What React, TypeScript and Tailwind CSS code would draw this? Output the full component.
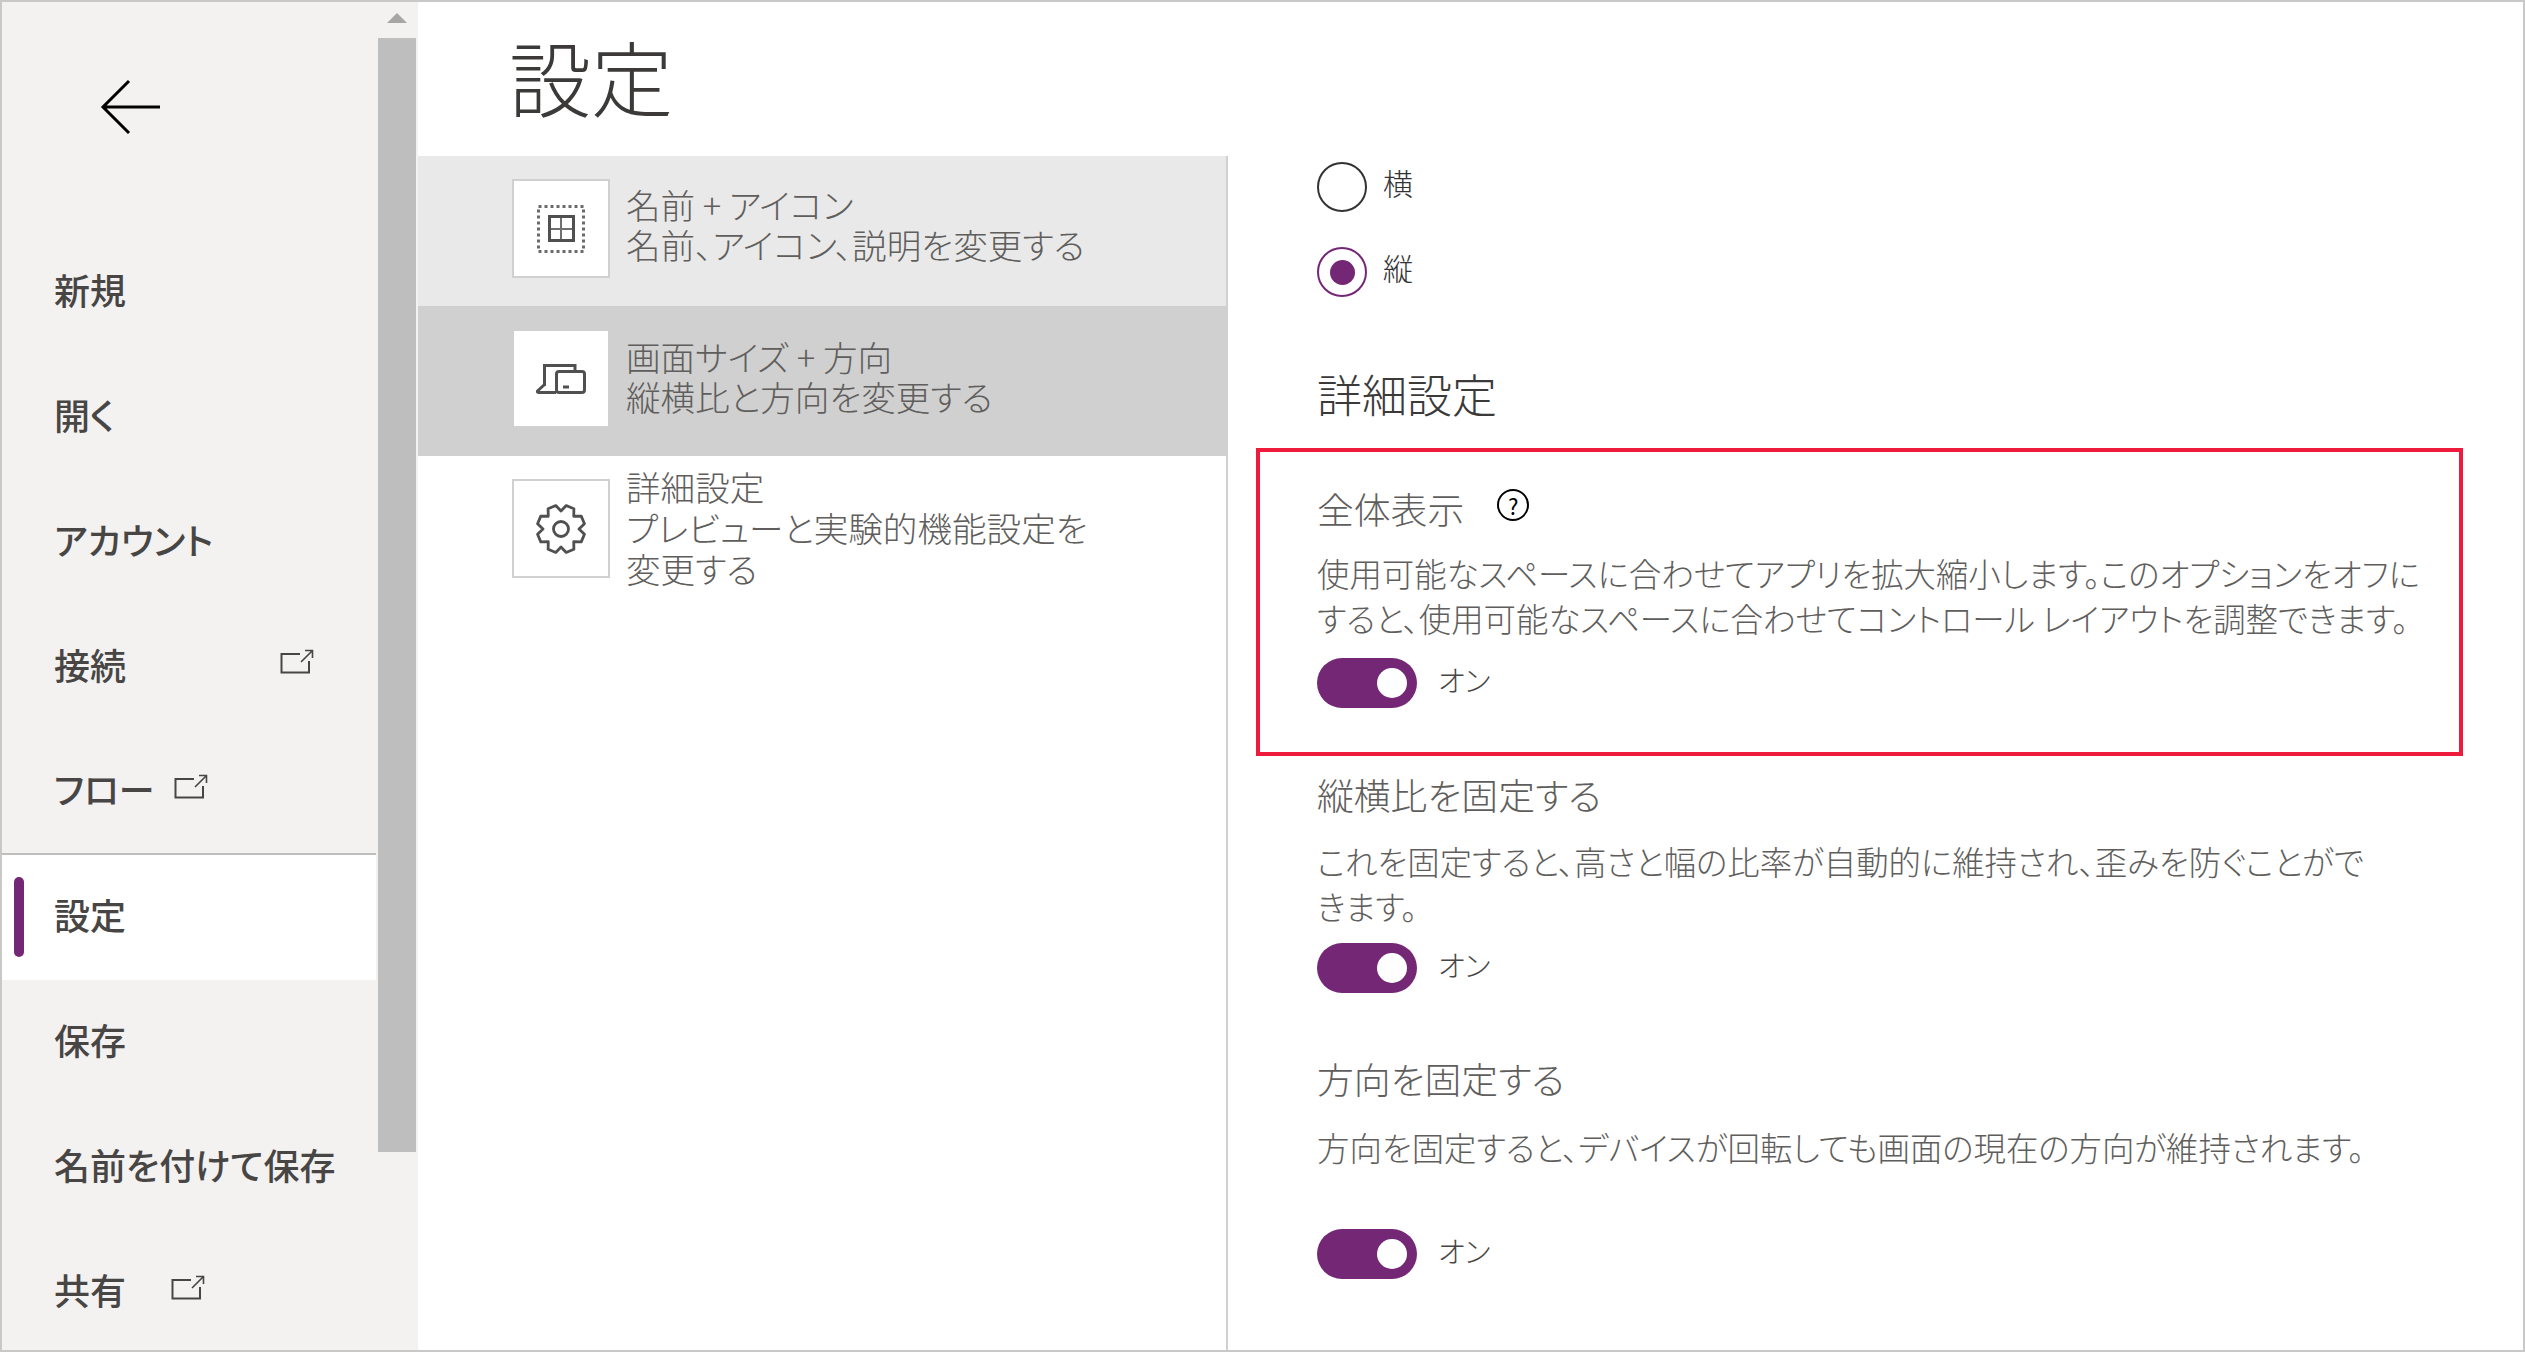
import React from 'react'

function ExternalIcon({ className }: { className: string }) {
    return (
        <svg className={className} width="34" height="25" viewBox="0 0 34 25" fill="none" stroke="#484644" strokeWidth="2">
            <path d="M20 5H1.5V23.5H29V12" />
            <path d="M21 13L32 2M25 1.5H32.5V9" strokeWidth="1.6" />
        </svg>
    )
}

// 8 teeth, with a notch straight up like the fluent gear glyph
const polar = (r: number, deg: number) => {
    const a = (deg * Math.PI) / 180
    return `${(26 + r * Math.sin(a)).toFixed(2)} ${(26 - r * Math.cos(a)).toFixed(2)}`
}
const gearPath =
    Array.from({ length: 8 }, (_, i) => {
        const c = 22.5 + i * 45
        return `${i === 0 ? 'M' : 'L'}${polar(18, c - 22.5)}L${polar(24, c - 10)}L${polar(24, c + 10)}`
    }).join('') + 'Z'

function GearIcon() {
    return (
        <svg width="52" height="52" viewBox="0 0 52 52" fill="none" stroke="#505050" strokeWidth="2.8" strokeLinejoin="round">
            <path d={gearPath} />
            <circle cx="26" cy="26" r="7.5" />
        </svg>
    )
}

const navItems = [
    { label: '新規' },
    { label: '開く' },
    { label: 'アカウント' },
    { label: '接続', icon: 'ml-[154px] -mt-[12px]' },
    { label: 'フロー', icon: 'ml-[19px] -mt-[10px]' },
    { label: '設定', active: true },
    { label: '保存' },
    { label: '名前を付けて保存' },
    { label: '共有', icon: 'ml-[45px] -mt-[10px]' },
]

function Sidebar() {
    return (
        <div className="w-[416px] shrink-0 flex bg-[#f3f2f1]">
            <div className="w-[374px] shrink-0">
                {/* back arrow */}
                <div className="h-[228px] pl-[98px] pt-[77px]">
                    <svg width="60" height="56" viewBox="0 0 60 56" fill="none" stroke="#000" strokeWidth="3">
                        <path d="M29 2L3 28L29 54M3 28H60" />
                    </svg>
                </div>
                {navItems.map((item) => (
                    <div
                        key={item.label}
                        className={`relative h-[125px] flex items-center pl-[52px] text-[36px] font-medium text-[#484644] ${item.active ? 'bg-white' : ''} ${item.label === 'フロー' ? 'border-b-2 border-[#bebebe]' : ''}`}
                    >
                        {item.active && <span className="absolute left-[12px] top-[22px] w-[10px] h-[80px] rounded-[5px] bg-[#742774]" />}
                        <span className="-mt-[7px]">{item.label}</span>
                        {item.icon && <ExternalIcon className={item.icon} />}
                    </div>
                ))}
            </div>
            <div className="ml-[2px] w-[38px] shrink-0">
                <div className="h-[36px] flex justify-center pt-[11px]">
                    <svg width="20" height="10" viewBox="0 0 20 10"><path d="M10 0L20 10H0Z" fill="#a6a6a6" /></svg>
                </div>
                <div className="h-[1114px] bg-[#bebebe]" />
            </div>
        </div>
    )
}

function OptionRow({ title, sub, tone, icon, textClass }: { title: string; sub: React.ReactNode; tone: string; icon: React.ReactNode; textClass: string }) {
    return (
        <div className={`h-[150px] pl-[94px] pt-[23px] flex ${tone}`}>
            <div className="w-[98px] h-[99px] shrink-0 bg-white border-2 border-[#d0d0d0] flex items-center justify-center">{icon}</div>
            <div className={`ml-[16px] text-[34.6px] text-[#605e5c] font-light ${textClass}`}>
                <div>{title}</div>
                <div>{sub}</div>
            </div>
        </div>
    )
}

function Toggle({ className }: { className: string }) {
    return (
        <div className={`flex items-center ${className}`}>
            <div className="w-[100px] h-[50px] rounded-full bg-[#742774] flex items-center justify-end pr-[10px]">
                <span className="w-[30px] h-[30px] rounded-full bg-white" />
            </div>
            <span className="ml-[21px] -mt-[7px] text-[29px] text-[#484644] font-light">オン</span>
        </div>
    )
}

function App() {
    return (
        <div className="w-[2525px] h-[1352px] overflow-hidden border-2 border-[#c8c8c8] flex bg-white font-['Noto_Sans_CJK_JP',sans-serif] [font-feature-settings:'palt']">
            <Sidebar />
            <div className="flex-1 flex flex-col min-w-0">
                <h1 className="h-[154px] pl-[91px] pt-[24px] text-[82px] leading-[100px] text-[#3b3a39] font-light">設定</h1>
                <div className="flex flex-1 min-h-0">
                    {/* option list */}
                    <div className="w-[810px] shrink-0 border-r-2 border-[#d0d0d0]">
                        <OptionRow
                            tone="bg-[#e9e9e9]"
                            textClass="leading-[40px] mt-[5px]"
                            title="名前 + アイコン"
                            sub="名前、アイコン、説明を変更する"
                            icon={
                                <svg width="48" height="48" viewBox="0 0 48 48" fill="none" stroke="#505050">
                                    <rect x="1.5" y="1.5" width="45" height="45" strokeWidth="3" strokeDasharray="3 3" opacity="0.85" />
                                    <path d="M24 12V36M12 24H36" strokeWidth="2" stroke="#707070" />
                                    <rect x="12.5" y="11.5" width="24" height="24" strokeWidth="3" />
                                </svg>
                            }
                        />
                        <OptionRow
                            tone="bg-[#d0d0d0]"
                            textClass="leading-[40px] mt-[7px]"
                            title="画面サイズ + 方向"
                            sub="縦横比と方向を変更する"
                            icon={
                                <svg width="50" height="30" viewBox="0 0 50 30" fill="none" stroke="#505050" strokeWidth="3">
                                    <path d="M8.5 22V1.5H39V6" />
                                    <path d="M8 21L1.5 27Q1 28.5 3 28.5H20" />
                                    <rect x="20.5" y="7.5" width="28" height="21" rx="2.5" />
                                    <path d="M27 23H33" />
                                </svg>
                            }
                        />
                        <OptionRow
                            tone="bg-white"
                            textClass="leading-[41px] -mt-[13px]"
                            title="詳細設定"
                            sub={<>プレビューと実験的機能設定を<br />変更する</>}
                            icon={<GearIcon />}
                        />
                    </div>
                    {/* settings pane */}
                    <div className="flex-1 min-w-0 relative pl-[89px] text-[#605e5c]">
                        <div className="flex flex-col gap-[35px] pt-[6px]">
                            <div className="flex items-center h-[50px]">
                                <span className="w-[50px] h-[50px] rounded-full border-2 border-[#333] bg-white" />
                                <span className="ml-[16px] -mt-[10px] text-[30px] text-[#333] font-light">横</span>
                            </div>
                            <div className="flex items-center h-[50px]">
                                <span className="w-[50px] h-[50px] rounded-full border-2 border-[#742774] flex items-center justify-center">
                                    <span className="w-[25px] h-[25px] rounded-full bg-[#742774]" />
                                </span>
                                <span className="ml-[16px] -mt-[10px] text-[30px] text-[#333] font-light">縦</span>
                            </div>
                        </div>
                        <h2 className="mt-[67px] text-[45px] leading-[60px] text-[#3b3a39] font-light">詳細設定</h2>

                        {/* highlighted call-out, sits over the row */}
                        <div className="absolute left-[28px] top-[292px] w-[1207px] h-[308px] border-4 border-[#ee1b3d]" />

                        <div className="mt-[59px] flex items-center h-[50px]">
                            <span className="text-[36.8px] leading-[50px] font-light">全体表示</span>
                            <span className="ml-[33px] -mt-[6px] w-[32px] h-[32px] rounded-full border-2 border-black flex items-center justify-center text-[22px] leading-none text-black">?</span>
                        </div>
                        <p className="mt-[17px] text-[32.4px] leading-[45px] font-light">
                            使用可能なスペースに合わせてアプリを拡大縮小します。このオプションをオフに<br />
                            すると、使用可能なスペースに合わせてコントロール レイアウトを調整できます。
                        </p>
                        <Toggle className="mt-[18px]" />

                        <div className="mt-[61px] text-[36.8px] leading-[50px] font-light">縦横比を固定する</div>
                        <p className="mt-[19px] text-[32.4px] leading-[45px] font-light">
                            これを固定すると、高さと幅の比率が自動的に維持され、歪みを防ぐことがで<br />
                            きます。
                        </p>
                        <Toggle className="mt-[15px]" />

                        <div className="mt-[60px] text-[36.8px] leading-[50px] font-light">方向を固定する</div>
                        <p className="mt-[21px] text-[32.4px] leading-[45px] font-light">方向を固定すると、デバイスが回転しても画面の現在の方向が維持されます。</p>
                        <Toggle className="mt-[60px]" />
                    </div>
                </div>
            </div>
        </div>
    )
}

export default App
